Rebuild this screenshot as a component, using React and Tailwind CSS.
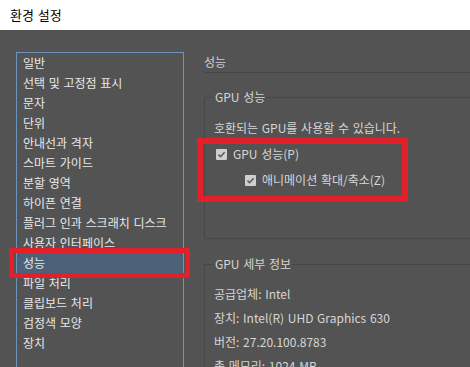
import React from "react";

const items = [
  "일반",
  "선택 및 고정점 표시",
  "문자",
  "단위",
  "안내선과 격자",
  "스마트 가이드",
  "분할 영역",
  "하이픈 연결",
  "플러그 인과 스크래치 디스크",
  "사용자 인터페이스",
  "성능",
  "파일 처리",
  "클립보드 처리",
  "검정색 모양",
  "장치",
];

function Check() {
  return (
    <span className="flex h-[11px] w-[11px] items-center justify-center rounded-[1px] bg-[#cfcfcf]">
      <svg width="9" height="9" viewBox="0 0 9 9">
        <polyline points="1.5,4.6 3.6,6.7 7.6,2.3" fill="none" stroke="#5a5a5a" strokeWidth="1.6" />
      </svg>
    </span>
  );
}

export default function App() {
  return (
    <div
      className="relative h-[367px] w-[470px] overflow-hidden [word-spacing:1px]"
      style={{ fontFamily: '"Segoe UI", "Noto Sans CJK KR", "Noto Sans", sans-serif' }}
    >
      <div className="flex h-[30px] items-center bg-white pl-[10px] text-[13px] text-black">
        환경 설정
      </div>
      <div className="flex h-[337px] bg-[#535353]">
        <div className="pl-[16px] pt-[22px]">
          <div className="h-[330px] w-[168px] border border-[#6b93bc] text-[12px] text-[#e8e8e8]">
            {items.map((t) => (
              <div
                key={t}
                className={`h-[20px] pl-[6px] leading-[20px] ${t === "성능" ? "bg-[#4c6178]" : ""}`}
              >
                {t}
              </div>
            ))}
          </div>
        </div>
        <div className="ml-[20px] flex-1 pt-[22px] text-[12px] text-[#d6d6d6]">
          <div className="h-[21px] border-b border-[#474747] leading-[20px] text-[#d0d0d0]">성능</div>
          <fieldset className="mt-[16px] border border-r-0 border-[#474747] pb-[45px] pl-[9px]">
            <legend className="h-[16px] px-[1px] leading-[16px] text-[#d4d4d4]">GPU 성능</legend>
            <div className="pt-[10px]">
              <div className="flex h-[26px] items-center">호환되는 GPU를 사용할 수 있습니다.</div>
              <div className="flex h-[26px] items-center gap-[6px] pl-[2px]">
                <Check />
                <span>GPU 성능(P)</span>
              </div>
              <div className="flex h-[26px] items-center gap-[6px] pl-[31px]">
                <Check />
                <span>애니메이션 확대/축소(Z)</span>
              </div>
            </div>
          </fieldset>
          <fieldset className="mt-[17px] border border-r-0 border-[#474747] pb-[20px] pl-[9px]">
            <legend className="h-[16px] px-[1px] leading-[16px] text-[#d4d4d4]">GPU 세부 정보</legend>
            <div className="pt-[10px]">
              <div className="flex h-[24px] items-center">공급업체: Intel</div>
              <div className="flex h-[24px] items-center">장치: Intel(R) UHD Graphics 630</div>
              <div className="flex h-[24px] items-center">버전: 27.20.100.8783</div>
              <div className="flex h-[24px] items-center">총 메모리: 1024 MB</div>
            </div>
          </fieldset>
        </div>
      </div>
      <div className="pointer-events-none absolute left-[9px] top-[248px] h-[30px] w-[181px] border-[5px] border-[#e3202a]" />
      <div className="pointer-events-none absolute left-[197px] top-[138px] h-[64px] w-[211px] border-[6px] border-[#e3202a]" />
    </div>
  );
}
